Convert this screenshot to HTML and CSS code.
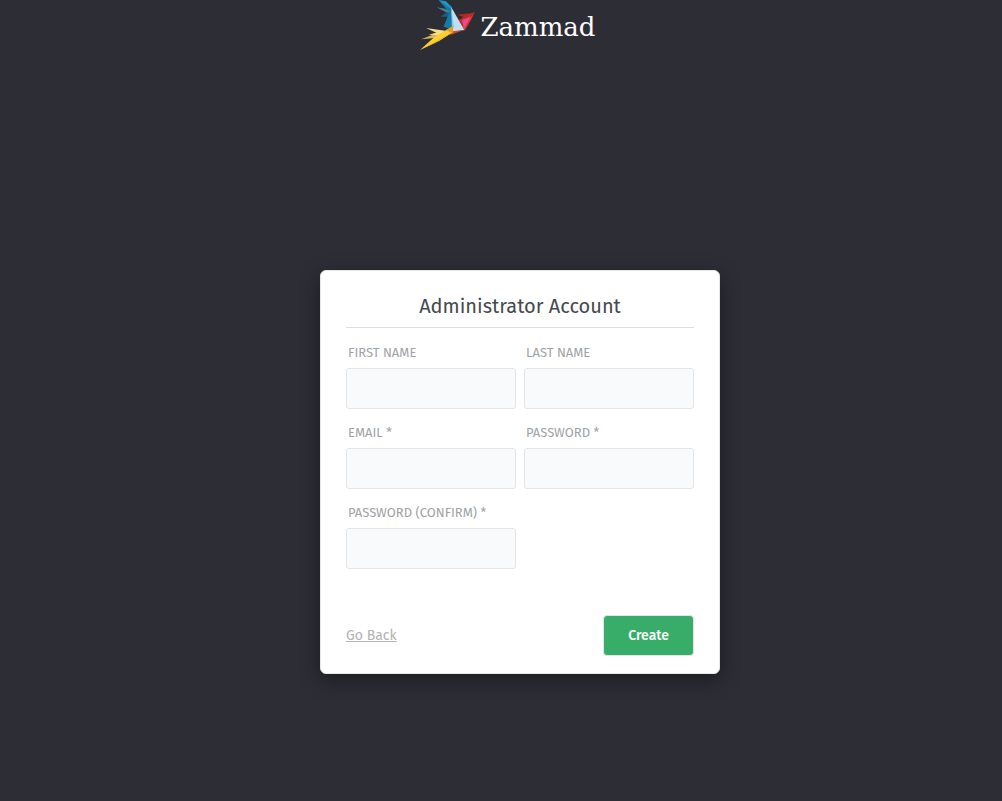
FILE: index.html
```html
<!DOCTYPE html>
<html lang="en">
<head>
    <meta charset="UTF-8">
    <meta name="viewport" content="width=device-width, initial-scale=1.0">
    <title>Zammad</title>
    <link rel="stylesheet" href="styles.css">
</head>
<body>
    <header class="logo">
        <svg class="logo-bird" viewBox="30 0 165 150" aria-hidden="true">
            <polygon fill="#1f97c4" points="86,0 108,4 126,22 122,40"/>
            <polygon fill="#137ba6" points="86,0 122,26 120,38"/>
            <polygon fill="#45829a" points="80,22 106,26 122,36 118,42"/>
            <polygon fill="#1b5f7c" points="92,50 108,38 122,36 118,50"/>
            <polygon fill="#1f97c4" points="124,22 124,84 101,80 118,44"/>
            <polygon fill="#137ba6" points="124,22 130,80 120,86 101,80"/>
            <polygon fill="#b5281f" points="142,44 180,40 162,52"/>
            <polygon fill="#d93a25" points="194,36 184,58 164,92 156,78"/>
            <polygon fill="#c42a24" points="194,36 176,42 146,60 156,78"/>
            <polygon fill="#e84a93" points="182,50 156,60 162,86"/>
            <polygon fill="#bfe0f3" points="124,22 163,90 128,96"/>
            <polygon fill="#8fc7e4" points="124,22 132,80 126,96"/>
            <polygon fill="#d8482a" points="128,94 164,89 118,106"/>
            <polygon fill="#f3dc8c" points="48,84 106,92 92,104"/>
            <polygon fill="#d9b45a" points="34,118 68,104 90,102 74,114"/>
            <polygon fill="#f7e08a" points="56,104 98,92 88,106"/>
            <polygon fill="#fdcf2f" points="30,150 74,110 130,78 126,98 88,122"/>
            <polygon fill="#f5b521" points="30,150 128,96 88,122"/>
            <polygon fill="#ee9b1c" points="108,90 130,78 128,100"/>
        </svg>
        <span class="logo-name">Zammad</span>
    </header>

    <main class="setup">
        <form class="card">
            <h1>Administrator Account</h1>
            <div class="fields">
                <div class="field">
                    <label for="firstname">First name</label>
                    <input type="text" id="firstname" name="firstname">
                </div>
                <div class="field">
                    <label for="lastname">Last name</label>
                    <input type="text" id="lastname" name="lastname">
                </div>
                <div class="field">
                    <label for="email">Email *</label>
                    <input type="email" id="email" name="email" required>
                </div>
                <div class="field">
                    <label for="password">Password *</label>
                    <input type="password" id="password" name="password" required>
                </div>
                <div class="field">
                    <label for="password-confirm">Password (confirm) *</label>
                    <input type="password" id="password-confirm" name="password-confirm" required>
                </div>
            </div>
            <div class="controls">
                <a href="#">Go Back</a>
                <button type="submit">Create</button>
            </div>
        </form>
    </main>
</body>
</html>
```
FILE: styles.css
```css
* {
    box-sizing: border-box;
}
body {
    display: flex;
    flex-direction: column;
    min-height: 100vh;
    margin: 0;
    background-color: #2d2d36;
    font-family: "Fira Sans", "Noto Sans", sans-serif;
    font-size: 14px;
    color: #444a4f;
}
.logo {
    display: flex;
    justify-content: center;
    align-items: center;
    gap: 5px;
    height: 50px;
    padding-left: 14px;
}
.logo-bird {
    width: 55px;
    height: 50px;
}
.logo-name {
    padding-top: 4px;
    font-family: "DejaVu Serif", serif;
    font-size: 26px;
    line-height: 46px;
    color: #fff;
}
.setup {
    flex: 1;
    display: flex;
    justify-content: center;
    align-items: center;
    padding: 93px 0 0 38px;
}
.card {
    width: 400px;
    padding: 17px 25px;
    border: 1px solid #e6e6e6;
    border-radius: 6px;
    background-color: #fff;
    box-shadow: 0 6px 20px rgba(0, 0, 0, 0.4);
}
h1 {
    margin: 0 0 15px;
    padding-bottom: 2px;
    border-bottom: 1px solid #dcdfe0;
    font-size: 20px;
    font-weight: normal;
    line-height: 37px;
    text-align: center;
}
.fields {
    display: grid;
    grid-template-columns: 1fr 1fr;
    gap: 14px 8px;
}
.field {
    display: flex;
    flex-direction: column;
}
label {
    padding-left: 2px;
    margin-bottom: 5px;
    font-size: 13px;
    line-height: 20px;
    text-transform: uppercase;
    white-space: nowrap;
    color: #a0a3a6;
}
input {
    width: 100%;
    height: 41px;
    padding: 8px 12px;
    border: 1px solid #e3e5e6;
    border-radius: 3px;
    background-color: #f9fafc;
    font: inherit;
    color: inherit;
}
.controls {
    display: flex;
    justify-content: space-between;
    align-items: center;
    margin-top: 46px;
}
.controls a {
    color: #b3b3b3;
}
button {
    height: 41px;
    padding: 0 24px;
    border: 1px solid #e0e6e2;
    border-radius: 4px;
    background-color: #38ad69;
    font: inherit;
    font-weight: 500;
    color: #fff;
    cursor: pointer;
}
button:hover {
    background-color: #309a5c;
}
```
